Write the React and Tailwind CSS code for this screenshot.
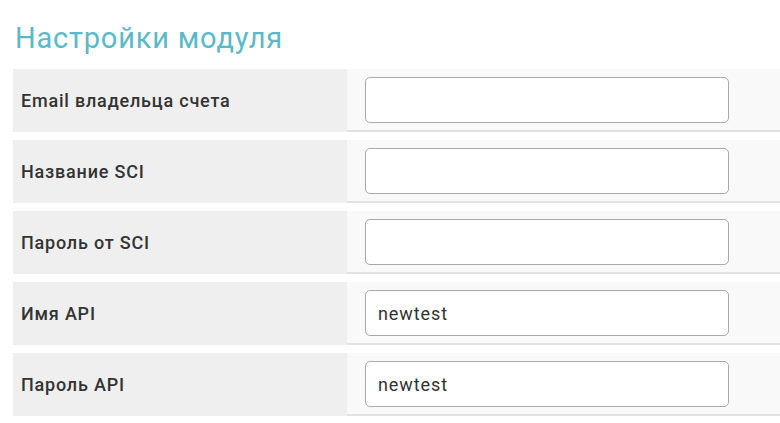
const fields = [
  { label: 'Email владельца счета', value: '' },
  { label: 'Название SCI', value: '' },
  { label: 'Пароль от SCI', value: '' },
  { label: 'Имя API', value: 'newtest' },
  { label: 'Пароль API', value: 'newtest' },
]

function SettingRow({ label, value }) {
  return (
    <div className="flex h-[63px]">
      <div className="w-[334px] shrink-0 flex items-center pl-2 bg-[#efefef] text-[18px] font-medium text-[#333]">
        {label}
      </div>
      <div className="flex-1 pl-[18px] pt-2 bg-[#f9f9f9] border-b-2 border-[#e2e2e2]">
        <input
          type="text"
          defaultValue={value}
          className="w-[364px] h-[46px] rounded-[5px] border border-[#a9a9a9] bg-white px-3 text-[18px] tracking-wider text-[#333] outline-none"
        />
      </div>
    </div>
  )
}

export default function App() {
  return (
    <div className="min-h-[423px] bg-white pl-[13px] pt-[20px] tracking-wider" style={{ fontFamily: 'Roboto, "Noto Sans", sans-serif' }}>
      <h1 className="text-[29px] leading-[36px] text-[#5ab9c9] pl-[2px] mb-[13px]">Настройки модуля</h1>
      <div className="flex flex-col gap-2">
        {fields.map((f) => (
          <SettingRow key={f.label} label={f.label} value={f.value} />
        ))}
      </div>
    </div>
  )
}
